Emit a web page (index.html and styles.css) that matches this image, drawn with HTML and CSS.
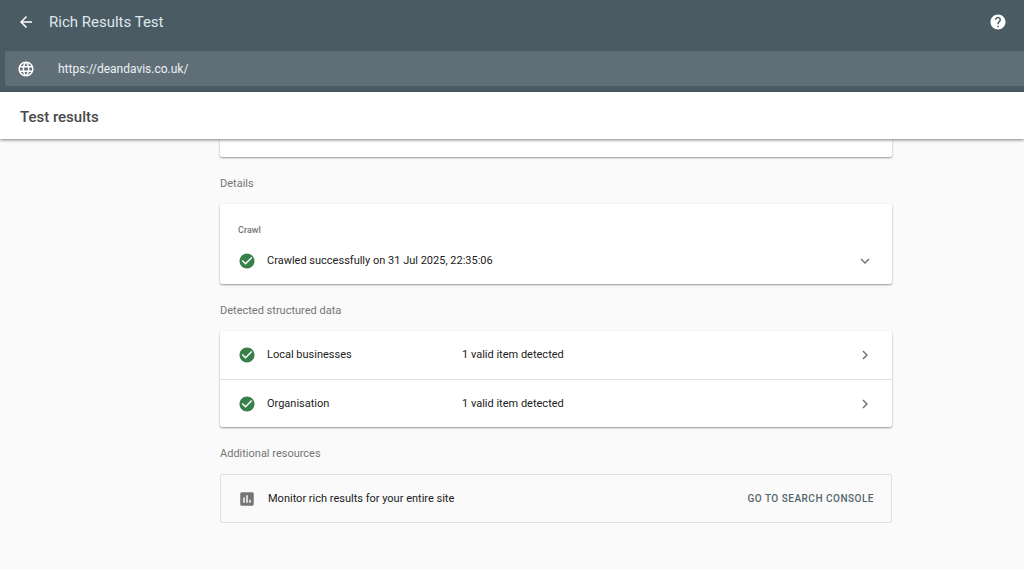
FILE: index.html
```
<!DOCTYPE html>
<html lang="en-GB">
	<head>
		<meta charset="utf-8">
		<meta name="viewport" content="width=device-width, initial-scale=1">
		<title>Rich Results Test</title>
		<link rel="stylesheet" href="styles.css">
	</head>
	<body>
		<!-- shared icons -->
		<svg class="sprite" aria-hidden="true">
			<symbol id="check" viewBox="0 0 24 24">
				<path d="M12 2C6.48 2 2 6.48 2 12s4.48 10 10 10 10-4.48 10-10S17.52 2 12 2zm-2 15l-5-5 1.41-1.41L10 14.17l7.59-7.59L19 8l-9 9z"/>
			</symbol>
			<symbol id="chevron" viewBox="0 0 24 24">
				<path d="M10 6L8.59 7.41 13.17 12l-4.58 4.59L10 18l6-6z"/>
			</symbol>
		</svg>

		<header class="header">
			<div class="toolbar">
				<button class="icon-button" type="button" aria-label="Back">
					<svg class="icon" viewBox="0 0 24 24"><path d="M20 11H7.83l5.59-5.59L12 4l-8 8 8 8 1.41-1.41L7.83 13H20v-2z"/></svg>
				</button>
				<h1>Rich Results Test</h1>
				<button class="icon-button help" type="button" aria-label="Help">
					<svg class="icon" viewBox="0 0 24 24"><path d="M12 2C6.48 2 2 6.48 2 12s4.48 10 10 10 10-4.48 10-10S17.52 2 12 2zm1 17h-2v-2h2v2zm2.07-7.75l-.9.92C13.45 12.9 13 13.5 13 15h-2v-.5c0-1.1.45-2.1 1.17-2.83l1.24-1.26c.37-.36.59-.86.59-1.41 0-1.1-.9-2-2-2s-2 .9-2 2H8c0-2.21 1.79-4 4-4s4 1.79 4 4c0 .88-.36 1.68-.93 2.25z"/></svg>
				</button>
			</div>
			<form class="url-bar">
				<label for="url" aria-label="URL to test">
					<svg class="icon" viewBox="0 0 24 24"><path d="M11.99 2C6.47 2 2 6.48 2 12s4.47 10 9.99 10C17.52 22 22 17.52 22 12S17.52 2 11.99 2zm6.93 6h-2.95c-.32-1.25-.78-2.45-1.38-3.56 1.84.63 3.37 1.91 4.33 3.56zM12 4.04c.83 1.2 1.48 2.53 1.91 3.96h-3.82c.43-1.43 1.08-2.76 1.91-3.96zM4.26 14C4.1 13.36 4 12.69 4 12s.1-1.36.26-2h3.38c-.08.66-.14 1.32-.14 2s.06 1.34.14 2H4.26zm.82 2h2.95c.32 1.25.78 2.45 1.38 3.56-1.84-.63-3.37-1.9-4.33-3.56zm2.95-8H5.08c.96-1.66 2.49-2.93 4.33-3.56C8.81 5.55 8.35 6.75 8.03 8zM12 19.96c-.83-1.2-1.48-2.53-1.91-3.96h3.82c-.43 1.43-1.08 2.76-1.91 3.96zM14.34 14H9.66c-.09-.66-.16-1.32-.16-2s.07-1.35.16-2h4.68c.09.65.16 1.32.16 2s-.07 1.34-.16 2zm.25 5.56c.6-1.11 1.06-2.31 1.38-3.56h2.95c-.96 1.65-2.49 2.93-4.33 3.56zM16.36 14c.08-.66.14-1.32.14-2s-.06-1.34-.14-2h3.38c.16.64.26 1.31.26 2s-.1 1.36-.26 2h-3.38z"/></svg>
				</label>
				<input id="url" type="text" value="https://deandavis.co.uk/" spellcheck="false">
			</form>
		</header>

		<div class="results-bar">
			<h2>Test results</h2>
		</div>

		<main>
			<div class="card summary"></div>

			<h3>Details</h3>
			<section class="card crawl">
				<h4>Crawl</h4>
				<button class="row" type="button">
					<svg class="icon valid"><use href="#check"/></svg>
					<span>Crawled successfully on 31 Jul 2025, 22:35:06</span>
					<svg class="icon arrow down"><use href="#chevron"/></svg>
				</button>
			</section>

			<h3>Detected structured data</h3>
			<section class="card">
				<button class="row item" type="button">
					<svg class="icon valid"><use href="#check"/></svg>
					<span class="type">Local businesses</span>
					<span>1 valid item detected</span>
					<svg class="icon arrow"><use href="#chevron"/></svg>
				</button>
				<button class="row item" type="button">
					<svg class="icon valid"><use href="#check"/></svg>
					<span class="type">Organisation</span>
					<span>1 valid item detected</span>
					<svg class="icon arrow"><use href="#chevron"/></svg>
				</button>
			</section>

			<h3>Additional resources</h3>
			<section class="resource">
				<svg class="icon" viewBox="0 0 24 24"><path d="M19 3H5c-1.1 0-2 .9-2 2v14c0 1.1.9 2 2 2h14c1.1 0 2-.9 2-2V5c0-1.1-.9-2-2-2zM9 17H7v-7h2v7zm4 0h-2V7h2v10zm4 0h-2v-4h2v4z"/></svg>
				<span>Monitor rich results for your entire site</span>
				<a href="#">Go to Search Console</a>
			</section>
		</main>
	</body>
</html>
```
FILE: styles.css
```
* {
	box-sizing: border-box;
}
body {
	margin: 0;
	font-family: Roboto, "Liberation Sans", sans-serif;
	font-size: 11px;
	line-height: 16px;
	color: #212121;
	background-color: #fafafa;
}
h1, h2, h3, h4 {
	margin: 0;
}
button, input {
	padding: 0;
	border: none;
	background: none;
	color: inherit;
	font: inherit;
}
button {
	cursor: pointer;
}
svg {
	display: block;
	flex: none;
	fill: currentColor;
}
.sprite {
	display: none;
}
.icon {
	width: 18px;
	height: 18px;
}

.header {
	padding: 0 0 6px 5px;
	color: white;
	background-color: #4a5b64;
}
.toolbar {
	display: flex;
	align-items: center;
	height: 51px;
	padding: 0 17px 8px 12px;
}
.toolbar h1 {
	margin-left: 14px;
	color: #dfe7ea;
	font-size: 15px;
	font-weight: 400;
	line-height: 20px;
}
.help {
	margin-left: auto;
}
.url-bar {
	display: flex;
	align-items: center;
	height: 35px;
	padding-left: 12px;
	border-radius: 2px 0 0 2px;
	background-color: #606f77;
}
.url-bar input {
	flex: 1;
	margin-left: 23px;
	outline: 0;
	color: #edf1f3;
	font-size: 12px;
}

.results-bar {
	position: relative;
	display: flex;
	align-items: center;
	height: 47px;
	padding: 2px 20px 0;
	background-color: white;
	box-shadow: 0 1px 3px rgba(0, 0, 0, 0.5);
}
.results-bar h2 {
	color: #484848;
	font-size: 15px;
	font-weight: 500;
	line-height: 20px;
}

main {
	max-width: 892px;
	padding: 0 0 48px 220px;
}
h3 {
	padding: 19px 0 12px;
	color: #757575;
	font-size: 11px;
	font-weight: 400;
}
.card {
	border-radius: 2px;
	background-color: white;
	box-shadow: 0 1px 2px rgba(0, 0, 0, 0.4);
}
.summary {
	height: 18px;
	border-radius: 0 0 2px 2px;
}
.crawl {
	padding-top: 18px;
}
.crawl h4 {
	padding-left: 18px;
	color: #757575;
	font-size: 9px;
	font-weight: 500;
}
.row {
	display: flex;
	align-items: center;
	width: 100%;
	height: 46px;
	padding: 0 18px;
	text-align: left;
}
.row span {
	margin-left: 11px;
}
.item {
	height: 48px;
}
.item + .item {
	border-top: 1px solid #e0e0e0;
}
.row .type {
	width: 184px;
}
.valid {
	color: #37804a;
}
.arrow {
	margin-left: auto;
	color: #757575;
}
.down {
	transform: rotate(90deg);
}

.resource {
	display: flex;
	align-items: center;
	height: 49px;
	padding: 0 17px;
	border: 1px solid #e0e0e0;
	border-radius: 2px;
}
.resource svg {
	color: #757575;
}
.resource span {
	margin-left: 12px;
}
.resource a {
	margin-left: auto;
	color: #55666e;
	font-size: 10px;
	font-weight: 500;
	letter-spacing: 0.05em;
	text-decoration: none;
	text-transform: uppercase;
}
```
